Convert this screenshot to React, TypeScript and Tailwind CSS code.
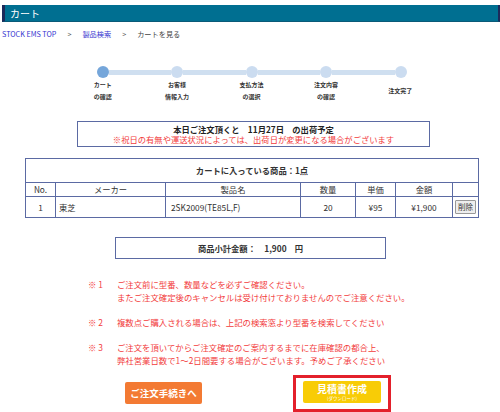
import React from 'react';

const steps = [
  { lines: ['カート', 'の確認'], active: true },
  { lines: ['お客様', '情報入力'], active: false },
  { lines: ['支払方法', 'の選択'], active: false },
  { lines: ['注文内容', 'の確認'], active: false },
  { lines: ['注文完了'], active: false },
];

const notes = [
  {
    no: '1',
    lines: ['ご注文前に型番、数量などを必ずご確認ください。', 'またご注文確定後のキャンセルは受け付けておりませんのでご注意ください。'],
  },
  { no: '2', lines: ['複数点ご購入される場合は、上記の検索窓より型番を検索してください'] },
  {
    no: '3',
    lines: ['ご注文を頂いてからご注文確定のご案内するまでに在庫確認の都合上、', '弊社営業日数で1～2日間要する場合がございます。予めご了承ください'],
  },
];

function Steps() {
  return (
    <div className="mx-auto mt-[26px] w-[373px] pl-[1px]">
      <div className="flex items-center px-[31px]">
        {steps.map((s, i) => (
          <React.Fragment key={i}>
            {i > 0 && <div className="h-[5px] flex-1 bg-[#cfdff0]" />}
            <div className={`h-[12px] w-[12px] shrink-0 rounded-full ${s.active ? 'bg-[#75a6da]' : 'bg-[#cbdcf0]'}`} />
          </React.Fragment>
        ))}
      </div>
      <div className="mt-[1px] grid grid-cols-5 text-[6px] font-bold leading-[12px] text-[#333]">
        {steps.map((s, i) => (
          <div key={i} className="flex h-[24px] flex-col items-center justify-center">
            {s.lines.map((l) => (
              <span key={l}>{l}</span>
            ))}
          </div>
        ))}
      </div>
    </div>
  );
}

export default function App() {
  const cell = 'border border-[#5b6aa3] px-[3px] whitespace-nowrap';
  return (
    <div
      className="h-[412px] w-[500px] overflow-hidden bg-white pl-[2px] pt-[5px] text-[#333]"
      style={{ fontFamily: '"Noto Sans CJK JP", "Noto Sans", sans-serif' }}
    >
      <div className="flex h-[17px] items-center border-b border-l-[3px] border-r-[2px] border-b-[#0a5a78] border-l-[#1d2a5a] border-r-[#1d2a5a] bg-[#006f91] pl-[5px] text-[10px] text-white">
        カート
      </div>

      <div className="mt-[6px] flex items-center gap-[11px] text-[7.2px] leading-[12px]">
        <span className="text-[#3434d0]">STOCK EMS TOP</span>
        <span className="text-[#555]">&gt;</span>
        <span className="text-[#3434d0]">製品検索</span>
        <span className="text-[#555]">&gt;</span>
        <span className="text-[#444]">カートを見る</span>
      </div>

      <Steps />

      <div className="ml-[75px] mt-[18px] flex h-[26px] w-[353px] flex-col items-center justify-center border border-[#5b6aa3] text-[8.3px] leading-[10.5px]">
        <div className="font-bold text-[#222]">本日ご注文頂くと　11月27日　の出荷予定</div>
        <div className="text-[#f23c3c]">※祝日の有無や運送状況によっては、出荷日が変更になる場合がございます</div>
      </div>

      <table className="ml-[23px] mt-[11px] w-[453px] table-fixed border-collapse text-[8.3px] leading-[11px] text-[#333]">
        <colgroup>
          <col className="w-[30px]" />
          <col className="w-[110px]" />
          <col className="w-[135px]" />
          <col className="w-[55px]" />
          <col className="w-[40px]" />
          <col className="w-[57px]" />
          <col className="w-[26px]" />
        </colgroup>
        <tbody>
          <tr className="h-[24px]">
            <td colSpan={7} className={`${cell} text-center font-bold`}>
              カートに入っている商品：1点
            </td>
          </tr>
          <tr className="h-[14px] text-center">
            <td className={cell}>No.</td>
            <td className={cell}>メーカー</td>
            <td className={cell}>製品名</td>
            <td className={cell}>数量</td>
            <td className={cell}>単価</td>
            <td className={cell}>金額</td>
            <td className={cell}></td>
          </tr>
          <tr className="h-[21px]">
            <td className={`${cell} text-center`}>1</td>
            <td className={cell}>東芝</td>
            <td className={`${cell} pl-[5px]`}>2SK2009(TE85L,F)</td>
            <td className={`${cell} text-center`}>20</td>
            <td className={`${cell} text-center`}>¥95</td>
            <td className={`${cell} text-center`}>¥1,900</td>
            <td className="border border-[#5b6aa3] text-center">
              <span className="inline-block whitespace-nowrap rounded-[1px] border border-[#999] bg-[#eee] px-[2px] text-[7.5px] leading-[12px]">
                削除
              </span>
            </td>
          </tr>
        </tbody>
      </table>

      <div className="ml-[113px] mt-[19px] flex h-[22px] w-[271px] items-center justify-center border border-[#5b6aa3] text-[8.3px] font-bold text-[#333]">
        商品小計金額：　1,900　円
      </div>

      <div className="ml-[86px] mt-[19px] text-[8.4px] leading-[13px] text-[#f23c3c]">
        {notes.map((n) => (
          <div key={n.no} className="mb-[12px] flex">
            <div className="w-[29px] shrink-0">※ {n.no}</div>
            <div>
              {n.lines.map((l) => (
                <div key={l}>{l}</div>
              ))}
            </div>
          </div>
        ))}
      </div>

      <div className="-mt-[4px] flex items-start">
        <div className="ml-[123px] mt-[7px] flex h-[22px] w-[77px] items-center justify-center rounded-[2px] bg-[#f37a33] text-[9.5px] font-bold text-white">
          ご注文手続きへ
        </div>
        <div className="ml-[91px] border-[3px] border-[#e3202b] px-[7px] pt-[3px] pb-[6px]">
          <div className="flex h-[22px] w-[78px] flex-col items-center justify-center rounded-[2px] bg-[#f8cc06] text-white">
            <span className="text-[10px] font-bold leading-[12px]">見積書作成</span>
            <span className="text-[4.5px] leading-[6px]">(ダウンロード)</span>
          </div>
        </div>
      </div>
    </div>
  );
}
